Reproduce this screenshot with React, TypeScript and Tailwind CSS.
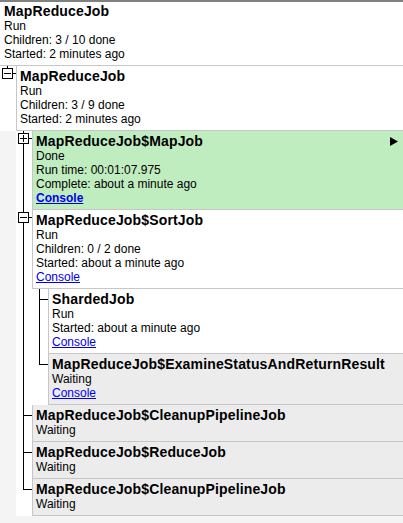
import type { ReactNode } from 'react';

type Tone = 'white' | 'green' | 'gray';

type Job = {
  name: string;
  status: string;
  lines?: string[];
  console?: 'plain' | 'bold';
  tone: Tone;
  arrow?: boolean;
  toggle?: 'plus' | 'minus';
  children?: Job[];
};

const tree: Job = {
  name: 'MapReduceJob',
  status: 'Run',
  lines: ['Children: 3 / 10 done', 'Started: 2 minutes ago'],
  tone: 'white',
  children: [
    {
      name: 'MapReduceJob',
      status: 'Run',
      lines: ['Children: 3 / 9 done', 'Started: 2 minutes ago'],
      tone: 'white',
      toggle: 'minus',
      children: [
        {
          name: 'MapReduceJob$MapJob',
          status: 'Done',
          lines: ['Run time: 00:01:07.975', 'Complete: about a minute ago'],
          console: 'bold',
          tone: 'green',
          arrow: true,
          toggle: 'plus',
        },
        {
          name: 'MapReduceJob$SortJob',
          status: 'Run',
          lines: ['Children: 0 / 2 done', 'Started: about a minute ago'],
          console: 'plain',
          tone: 'white',
          toggle: 'minus',
          children: [
            {
              name: 'ShardedJob',
              status: 'Run',
              lines: ['Started: about a minute ago'],
              console: 'plain',
              tone: 'white',
            },
            {
              name: 'MapReduceJob$ExamineStatusAndReturnResult',
              status: 'Waiting',
              console: 'plain',
              tone: 'gray',
            },
          ],
        },
        { name: 'MapReduceJob$CleanupPipelineJob', status: 'Waiting', tone: 'gray' },
        { name: 'MapReduceJob$ReduceJob', status: 'Waiting', tone: 'gray' },
        { name: 'MapReduceJob$CleanupPipelineJob', status: 'Waiting', tone: 'gray' },
      ],
    },
  ],
};

const toneClass: Record<Tone, string> = {
  white: 'bg-white',
  green: 'bg-[#c0edc0]',
  gray: 'bg-[#ececec]',
};

function Toggle({ kind }: { kind: 'plus' | 'minus' }) {
  return (
    <svg width="11" height="11" viewBox="0 0 11 11" className="block">
      <rect x="0.5" y="0.5" width="10" height="10" fill="white" stroke="black" />
      <line x1="2" y1="5.5" x2="9" y2="5.5" stroke="black" />
      {kind === 'plus' ? <line x1="5.5" y1="2" x2="5.5" y2="9" stroke="black" /> : null}
    </svg>
  );
}

function Arrow() {
  return (
    <svg width="8" height="9" viewBox="0 0 8 9" className="mt-[3px] mr-[5px] block shrink-0">
      <polygon points="0,0 8,4.5 0,9" fill="black" />
    </svg>
  );
}

function Box({ job, root }: { job: Job; root?: boolean }) {
  return (
    <div
      className={`border-b border-[#c6c6c6] ${root ? 'pt-[2px] pb-[4px] pl-[4px]' : 'border-l pt-[3px] pb-[4px] pl-[3px]'} ${toneClass[job.tone]}`}
    >
      <div className="flex items-start justify-between">
        <div className="text-[14px] leading-[15px] font-bold tracking-[0.15px]">{job.name}</div>
        {job.arrow ? <Arrow /> : null}
      </div>
      <div>{job.status}</div>
      {job.lines?.map((l) => <div key={l}>{l}</div>)}
      {job.console ? (
        <div>
          <a href="#" className={`text-[#0000ee] underline ${job.console === 'bold' ? 'font-bold' : ''}`}>
            Console
          </a>
        </div>
      ) : null}
    </div>
  );
}

// connectors in the 16px gutter left of each box
function Gutter({ job, last }: { job: Job; last: boolean }) {
  const y = job.toggle ? 7 : 10;
  return (
    <div className="relative w-4 shrink-0 bg-white">
      <div
        className={`absolute left-[7px] top-0 w-px bg-black ${last ? '' : 'bottom-0'}`}
        style={last ? { height: job.toggle ? 2 : y + 1 } : undefined}
      />
      {job.toggle ? (
        <>
          <div className="absolute left-[2px] top-[2px]">
            <Toggle kind={job.toggle} />
          </div>
          <div className="absolute left-[13px] top-[7px] h-px w-[3px] bg-black" />
        </>
      ) : (
        <div className="absolute left-[7px] top-[10px] h-px w-[9px] bg-black" />
      )}
    </div>
  );
}

function Node({ job, last }: { job: Job; last: boolean }) {
  const kids = job.children;
  return (
    <li>
      <div className="flex">
        <Gutter job={job} last={last} />
        <div className="min-w-0 flex-1">
          <Box job={job} />
        </div>
      </div>
      {kids && job.toggle === 'minus' ? (
        <div className="flex">
          <div className={`flex w-4 shrink-0 ${last ? '' : 'bg-white'}`}>
            {last ? null : <div className="ml-[7px] w-px bg-black" />}
          </div>
          <ChildList jobs={kids} />
        </div>
      ) : null}
    </li>
  );
}

function ChildList({ jobs }: { jobs: Job[] }): ReactNode {
  return (
    <ul className="min-w-0 flex-1 bg-white">
      {jobs.map((j, i) => (
        <Node key={j.name + i} job={j} last={i === jobs.length - 1} />
      ))}
    </ul>
  );
}

export default function App() {
  return (
    <div
      className="min-h-screen border-t-2 border-[#808080] bg-[#f4f4f4] text-[12px] leading-[14px] text-black"
      style={{ fontFamily: '"Liberation Sans", Arial, sans-serif' }}
    >
      <div className="bg-white">
        <Box job={tree} root />
      </div>
      <ul>
        {tree.children!.map((j, i) => (
          <Node key={i} job={j} last={i === tree.children!.length - 1} />
        ))}
      </ul>
    </div>
  );
}
